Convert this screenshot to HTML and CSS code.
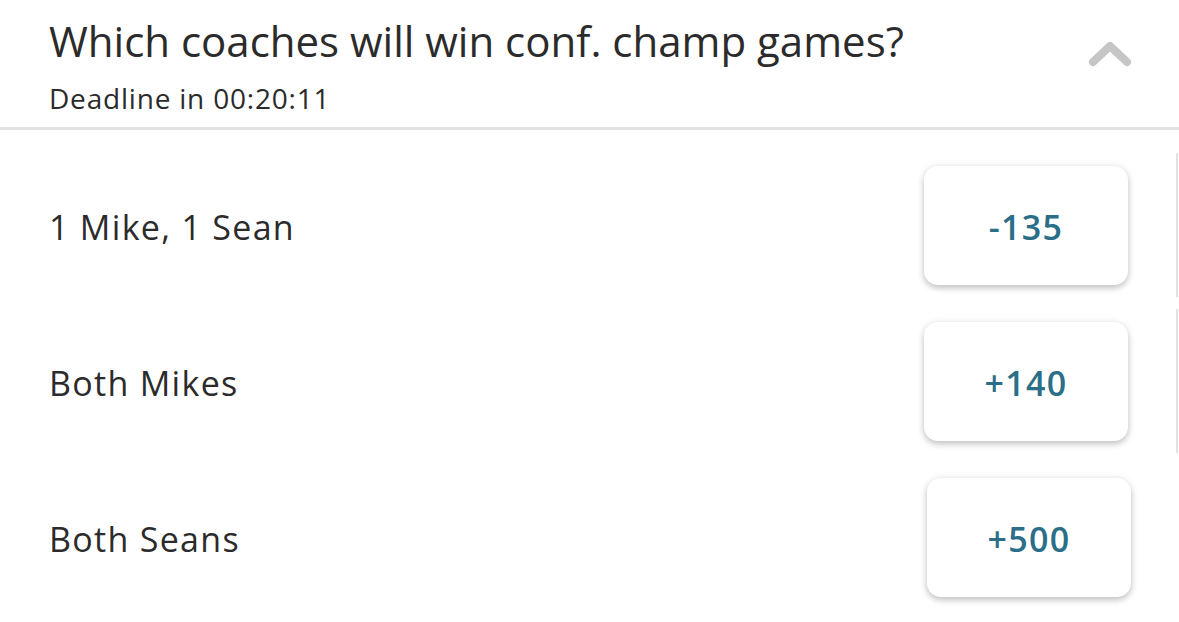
FILE: index.html
```html
<!DOCTYPE html>
<html lang="en">
<head>
    <meta charset="UTF-8">
    <meta name="viewport" content="width=device-width, initial-scale=1.0">
    <title>Conference Championship Props</title>
    <link rel="stylesheet" href="styles.css">
</head>
<body>
    <section class="market">
        <header class="market-header">
            <div class="market-info">
                <h1 class="market-title">Which coaches will win conf. champ games?</h1>
                <p class="market-deadline">Deadline in 00:20:11</p>
            </div>
            <button class="collapse-toggle" type="button" aria-label="Collapse">
                <svg width="44" height="28" viewBox="0 0 44 28">
                    <polyline points="5,23 22,7 39,23" fill="none" stroke="#c6c6c6" stroke-width="8" stroke-linecap="round" stroke-linejoin="round"/>
                </svg>
            </button>
        </header>

        <ul class="outcomes">
            <li class="outcome">
                <span class="outcome-name">1 Mike, 1 Sean</span>
                <button class="odds" type="button">-135</button>
                <span class="edge"></span>
            </li>
            <li class="outcome">
                <span class="outcome-name">Both Mikes</span>
                <button class="odds" type="button">+140</button>
                <span class="edge"></span>
            </li>
            <li class="outcome">
                <span class="outcome-name">Both Seans</span>
                <button class="odds" type="button">+500</button>
                <span class="edge edge-hidden"></span>
            </li>
        </ul>
    </section>
</body>
</html>
```

FILE: styles.css
```css
body {
    margin: 0;
    padding: 0;
    background-color: #ffffff;
    color: #2b2b2b;
    font-family: "Open Sans", "Noto Sans", sans-serif;
}
.market-header {
    display: flex;
    justify-content: space-between;
    align-items: flex-start;
    padding: 13px 47px 0 49px;
    height: 114px;
    border-bottom: 3px solid #e2e2e2;
}
.market-title {
    margin: 0;
    font-size: 42px;
    font-weight: 400;
    line-height: 56px;
}
.market-deadline {
    margin: 11px 0 0;
    font-size: 28px;
    letter-spacing: 0.8px;
    line-height: 36px;
}
.collapse-toggle {
    background: none;
    border: none;
    padding: 0;
    margin-top: 26px;
    cursor: pointer;
}
.collapse-toggle svg {
    display: block;
}
.outcomes {
    list-style: none;
    margin: 0;
    padding: 17px 0 0;
}
.outcome {
    display: flex;
    align-items: center;
    height: 156px;
    padding-left: 49px;
}
.outcome-name {
    flex: 1;
    padding-top: 4px;
    font-size: 34px;
    letter-spacing: 1.3px;
}
.odds {
    width: 204px;
    height: 119px;
    padding: 4px 0 0;
    border: none;
    border-radius: 14px;
    background-color: #ffffff;
    box-shadow: 0 3px 6px rgba(0, 0, 0, 0.22), 0 0 10px rgba(0, 0, 0, 0.06);
    color: #2a6e88;
    font-family: inherit;
    font-size: 34px;
    font-weight: 600;
    letter-spacing: 1.3px;
    cursor: pointer;
}
.edge {
    width: 2px;
    height: 144px;
    margin: 0 1px 0 48px;
    background-color: #e2e2e2;
}
.edge-hidden {
    margin-left: 45px;
    background-color: transparent;
}
```
